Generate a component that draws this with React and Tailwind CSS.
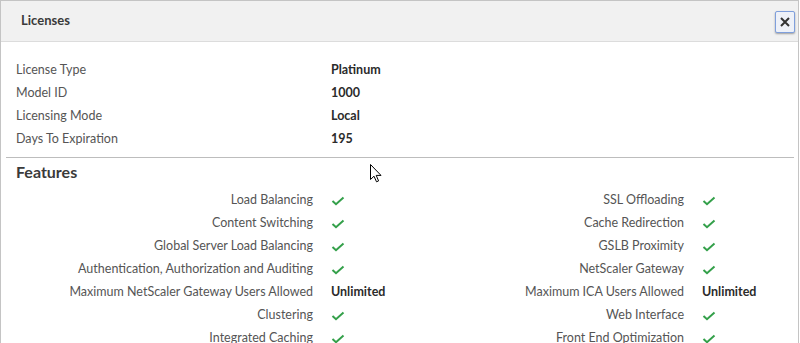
import React from 'react';

const info = [
    ['License Type', 'Platinum'],
    ['Model ID', '1000'],
    ['Licensing Mode', 'Local'],
    ['Days To Expiration', '195'],
];

const features = [
    ['Load Balancing', true, 'SSL Offloading', true],
    ['Content Switching', true, 'Cache Redirection', true],
    ['Global Server Load Balancing', true, 'GSLB Proximity', true],
    ['Authentication, Authorization and Auditing', true, 'NetScaler Gateway', true],
    ['Maximum NetScaler Gateway Users Allowed', 'Unlimited', 'Maximum ICA Users Allowed', 'Unlimited'],
    ['Clustering', true, 'Web Interface', true],
    ['Integrated Caching', true, 'Front End Optimization', true],
];

const Check = () => (
    <svg width="14" height="10" viewBox="0 0 14 10" className="block">
        <path d="M1.5 5 L5 8.2 L12.5 1.5" fill="none" stroke="#34a04a" strokeWidth="2" />
    </svg>
);

const Value = ({ v }) => (v === true ? <Check /> : <span className="font-bold text-[#2b2b2b]">{v}</span>);

const App = () => {
    return (
        <div className="relative w-[799px] h-[343px] overflow-hidden bg-white border border-b-0 border-[#c4c4c4] font-['Lato','Liberation_Sans',sans-serif] text-[12.5px] text-[#555]">
            {/* Header */}
            <header className="h-[41px] bg-[#f1f1f1] border-b border-[#dcdcdc] flex items-center justify-between pl-5 pr-[3px]">
                <h1 className="font-bold text-[13px] text-[#3a3a3a]">Licenses</h1>
                <button className="w-5 h-[22px] mt-[1px] rounded-[2px] border border-[#7f9fdc] bg-[#eef1f8] shadow-[0_1px_2px_rgba(0,0,0,0.35)] flex items-center justify-center">
                    <svg width="10" height="10" viewBox="0 0 10 10">
                        <path d="M1 1 L9 9 M9 1 L1 9" stroke="#333" strokeWidth="2" />
                    </svg>
                </button>
            </header>

            {/* License info */}
            <section className="pt-[17px] px-[15px]">
                {info.map(([k, v]) => (
                    <div key={k} className="h-[23px] flex items-center">
                        <span className="w-[315px]">{k}</span>
                        <span className="font-bold text-[#2b2b2b]">{v}</span>
                    </div>
                ))}
            </section>

            <div className="mt-[6px] ml-[5px] mr-[4px] border-t border-[#bdbdbd]" />

            {/* Features */}
            <section className="px-[15px]">
                <h2 className="h-[31px] pb-[3px] flex items-center font-bold text-[16px] text-[#3a3a3a]">Features</h2>
                <div className="grid grid-cols-[371px_1fr]">
                    {features.map(([l1, v1, l2, v2]) => (
                        <React.Fragment key={l1}>
                            <div className="h-[23px] flex items-center">
                                <span className="w-[297px] text-right">{l1}</span>
                                <span className="ml-[18px]"><Value v={v1} /></span>
                            </div>
                            <div className="h-[23px] flex items-center">
                                <span className="w-[297px] text-right">{l2}</span>
                                <span className="ml-[18px]"><Value v={v2} /></span>
                            </div>
                        </React.Fragment>
                    ))}
                </div>
            </section>

            {/* mouse cursor */}
            <svg className="absolute left-[369px] top-[163px]" width="12" height="20" viewBox="0 0 12 20">
                <path d="M0.5 0.5 L0.5 15.5 L4 12.2 L6.5 17.8 L8.6 16.9 L6.2 11.4 L11 11.4 Z" fill="#fff" stroke="#000" strokeWidth="1" />
            </svg>
        </div>
    );
};

export default App;
